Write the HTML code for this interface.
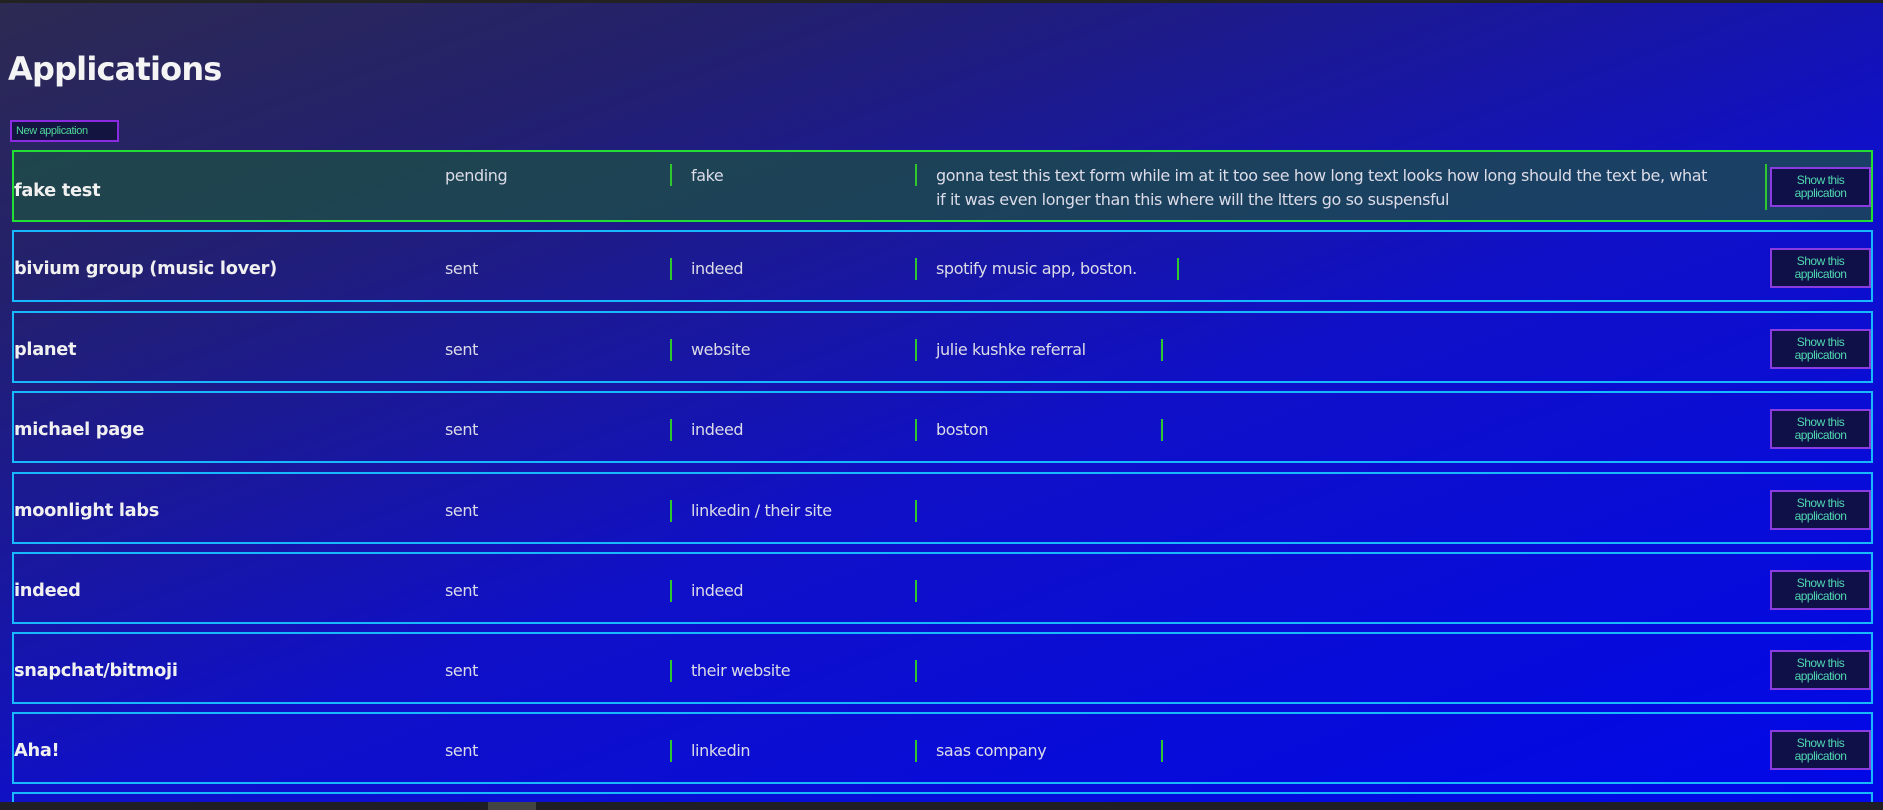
<!DOCTYPE html>
<html style="width:1883px;height:810px;overflow:hidden"><head><style>
*{box-sizing:border-box;margin:0;padding:0}
body{width:1883px;height:810px;overflow:hidden;font-family:"DejaVu Sans","Liberation Sans",sans-serif;color:#dcdce8;
background:linear-gradient(160deg,#2d2a52 0%,#23206e 20%,#1010c8 55%,#0008e8 100%);position:relative}
.topbar{position:absolute;left:0;top:0;width:1883px;height:3px;background:#222}
.botbar{position:absolute;left:0;top:802px;width:1883px;height:8px;background:#1e1e24}
.botbar i{position:absolute;left:488px;top:0;width:48px;height:8px;background:#444}
h1{position:absolute;left:8px;top:50px;font-size:32px;font-weight:bold;color:#f4f4f4;letter-spacing:-0.8px}
.new{position:absolute;left:10px;top:120px;width:109px;height:22px;border:2px solid #8a2be2;background:#141440;color:#4ed89a;font-size:11px;font-family:"Liberation Sans",sans-serif;letter-spacing:-0.4px;line-height:18px;padding-left:4px}
.row{position:absolute;left:12px;width:1861px;height:72px;border:2px solid #18b8ff;overflow:hidden}
.row.g{border-color:#22dd33;background:rgba(30,80,70,0.75)}
.n{position:absolute;left:0;top:3px;line-height:68px;font-weight:bold;font-size:17.8px;color:#f0f0f0;letter-spacing:-0.3px}
.s,.src,.nt{position:absolute;top:3px;line-height:68px;font-size:16px;letter-spacing:-0.4px}
.s{left:431px}
.src{left:677px}
.nt{left:922px}
.d{position:absolute;top:26px;width:2px;height:22px;background:#2ec82e}
.btn{position:absolute;left:1756px;top:16px;width:101px;height:40px;border:2px solid #8a3ce0;background:#101048;color:#4ed8b0;font-family:"Liberation Sans",sans-serif;font-size:12px;line-height:13px;text-align:center;padding-top:5px;letter-spacing:-0.5px}
</style></head><body>
<div class="topbar"></div>
<h1>Applications</h1>
<div class="new">New application</div>

<div class="row g" style="top:150px">
<div class="n" style="top:5px">fake test</div>
<div class="s" style="line-height:18px;top:15px">pending</div>
<div class="d" style="left:656px;top:12px"></div>
<div class="src" style="line-height:18px;top:15px">fake</div>
<div class="d" style="left:901px;top:12px"></div>
<div class="nt" style="line-height:24px;top:12px;width:780px;font-size:16px">gonna test this text form while im at it too see how long text looks how long should the text be, what if it was even longer than this where will the ltters go so suspensful</div>
<div class="d" style="left:1751px;top:12px;height:46px"></div>
<div class="btn" style="top:15px">Show this<br>application</div>
</div>

<div class="row" style="top:230px"><div class="n">bivium group (music lover)</div><div class="s">sent</div><div class="d" style="left:656px"></div><div class="src">indeed</div><div class="d" style="left:901px"></div><div class="nt">spotify music app, boston.</div><div class="d" style="left:1163px"></div><div class="btn">Show this<br>application</div></div>

<div class="row" style="top:311px"><div class="n">planet</div><div class="s">sent</div><div class="d" style="left:656px"></div><div class="src">website</div><div class="d" style="left:901px"></div><div class="nt">julie kushke referral</div><div class="d" style="left:1147px"></div><div class="btn">Show this<br>application</div></div>

<div class="row" style="top:391px"><div class="n">michael page</div><div class="s">sent</div><div class="d" style="left:656px"></div><div class="src">indeed</div><div class="d" style="left:901px"></div><div class="nt">boston</div><div class="d" style="left:1147px"></div><div class="btn">Show this<br>application</div></div>

<div class="row" style="top:472px"><div class="n">moonlight labs</div><div class="s">sent</div><div class="d" style="left:656px"></div><div class="src">linkedin / their site</div><div class="d" style="left:901px"></div><div class="btn">Show this<br>application</div></div>

<div class="row" style="top:552px"><div class="n">indeed</div><div class="s">sent</div><div class="d" style="left:656px"></div><div class="src">indeed</div><div class="d" style="left:901px"></div><div class="btn">Show this<br>application</div></div>

<div class="row" style="top:632px"><div class="n">snapchat/bitmoji</div><div class="s">sent</div><div class="d" style="left:656px"></div><div class="src">their website</div><div class="d" style="left:901px"></div><div class="btn">Show this<br>application</div></div>

<div class="row" style="top:712px"><div class="n">Aha!</div><div class="s">sent</div><div class="d" style="left:656px"></div><div class="src">linkedin</div><div class="d" style="left:901px"></div><div class="nt">saas company</div><div class="d" style="left:1147px"></div><div class="btn">Show this<br>application</div></div>

<div class="row" style="top:792px;height:14px;border-bottom:none"></div>
<div class="botbar"><i></i></div>
</body></html>
